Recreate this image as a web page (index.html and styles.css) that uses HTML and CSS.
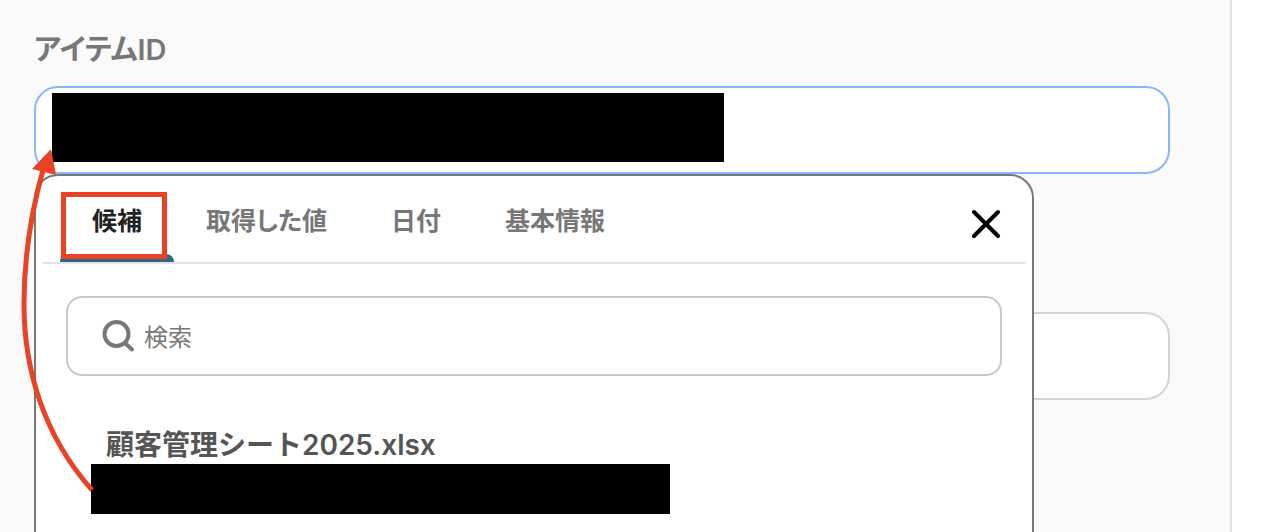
FILE: index.html
```html
<!DOCTYPE html>
<html lang="ja">
<head>
<meta charset="utf-8">
<meta name="viewport" content="width=device-width, initial-scale=1">
<title>アイテムID</title>
<link rel="stylesheet" href="styles.css">
</head>
<body>
<main class="panel">
  <div class="field">
    <label class="field-label" for="item-id">アイテムID</label>
    <div class="input-wrap">
      <input class="text-input text-input-active" id="item-id" type="text">
      <span class="mask mask-value"></span>
      <section class="popover" aria-label="候補の選択">
        <header class="popover-head">
          <nav class="tabs">
            <button class="tab tab-active" type="button">候補</button>
            <button class="tab" type="button">取得した値</button>
            <button class="tab" type="button">日付</button>
            <button class="tab" type="button">基本情報</button>
          </nav>
          <button class="close" type="button" aria-label="閉じる">
            <svg width="32" height="32" viewBox="0 0 32 32" fill="none" stroke="#000" stroke-width="4" stroke-linecap="round"><path d="M4 4 28 28M28 4 4 28"/></svg>
          </button>
        </header>
        <div class="popover-body">
          <label class="search">
            <svg width="34" height="34" viewBox="0 0 34 34" fill="none" stroke="#777" stroke-width="4" stroke-linecap="round"><circle cx="14.500" cy="14" r="12"/><path d="M23.500 23.500 30 29.500"/></svg>
            <input class="search-input" type="search" placeholder="検索" aria-label="検索">
          </label>
          <div class="result">
            <div class="result-title">顧客管理シート2025.xlsx</div>
            <div class="mask mask-result"></div>
          </div>
        </div>
      </section>
    </div>
  </div>
  <input class="text-input" type="text" aria-label="値">
  <svg class="arrow" width="110" height="350" viewBox="0 0 110 350" aria-hidden="true">
    <path d="M92 340C44 286 24 220 24 154C24 107 31 63 43 20" fill="none" stroke="#eb4226" stroke-width="5"/>
    <path d="M51 -1 56 25 32 19Z" fill="#eb4226"/>
  </svg>
</main>
</body>
</html>
```
FILE: styles.css
```css
* {
  box-sizing: border-box;
}

body {
  margin: 0;
  background: #fff;
  font-family: Inter, "Noto Sans CJK JP", sans-serif;
}

button,
input {
  font: inherit;
}

.panel {
  position: relative;
  height: 100vh;
  margin-right: 44px;
  padding: 30px 60px 0 34px;
  overflow: hidden;
  border-right: 2px solid #dee2e6;
  background: #fafafa;
}

.field {
  display: flex;
  flex-direction: column;
  gap: 16px;
  margin-bottom: 138px;
}

.field-label {
  color: #777;
  font-size: 29px;
  font-weight: 600;
  line-height: 40px;
  font-feature-settings: "palt";
}

.input-wrap {
  position: relative;
}

.text-input {
  display: block;
  width: 100%;
  height: 88px;
  padding: 0 16px;
  border: 2px solid #ced4da;
  border-radius: 24px;
  outline: 0;
  background: #fff;
  font-size: 28px;
}

.text-input-active {
  border-color: #86b7fe;
}

.mask {
  background: #000;
}

.mask-value {
  position: absolute;
  top: 7px;
  left: 18px;
  width: 672px;
  max-width: 90%;
  height: 69px;
}

.popover {
  position: absolute;
  z-index: 1;
  top: 100%;
  left: 0;
  width: 1000px;
  max-width: 100%;
  padding: 0 6px 48px;
  border: 2px solid #777;
  border-radius: 24px;
  background: #fff;
}

.popover-head {
  display: flex;
  justify-content: space-between;
  padding: 0 24px 0 18px;
  border-bottom: 2px solid #e4e4e4;
}

.tabs {
  display: flex;
}

.tab {
  height: 86px;
  padding: 4px 32px 0;
  border: 0;
  background: none;
  color: #777;
  font-size: 25px;
  font-weight: 600;
  line-height: 36px;
  font-feature-settings: "palt";
}

.tab-active {
  position: relative;
  color: #222;
}

.tab-active::before {
  content: "";
  position: absolute;
  right: 0;
  bottom: 0;
  left: 0;
  height: 8px;
  border-radius: 8px 8px 0 0;
  background: #2f6680;
}

.tab-active::after {
  content: "";
  position: absolute;
  top: 16px;
  right: 7px;
  bottom: 3px;
  left: 1px;
  border: 5px solid #eb4226;
}

.close {
  display: flex;
  align-items: center;
  padding: 10px 0 0;
  border: 0;
  background: none;
}

.popover-body {
  padding: 32px 24px 0;
}

.search {
  display: flex;
  align-items: center;
  gap: 8px;
  height: 80px;
  padding: 2px 34px 0;
  border: 2px solid #c8c8c8;
  border-radius: 16px;
}

.search-input {
  flex: 1;
  min-width: 0;
  padding: 0;
  border: 0;
  outline: 0;
  background: none;
  font-size: 24px;
}

.search-input::placeholder {
  color: #777;
}

.result {
  padding: 50px 25px 0;
}

.result-title {
  padding-left: 15px;
  color: #555;
  font-size: 28px;
  font-weight: 600;
  line-height: 38px;
}

.mask-result {
  width: 579px;
  max-width: 100%;
  height: 50px;
}

.arrow {
  position: absolute;
  z-index: 2;
  top: 150px;
  left: 0;
}
```
